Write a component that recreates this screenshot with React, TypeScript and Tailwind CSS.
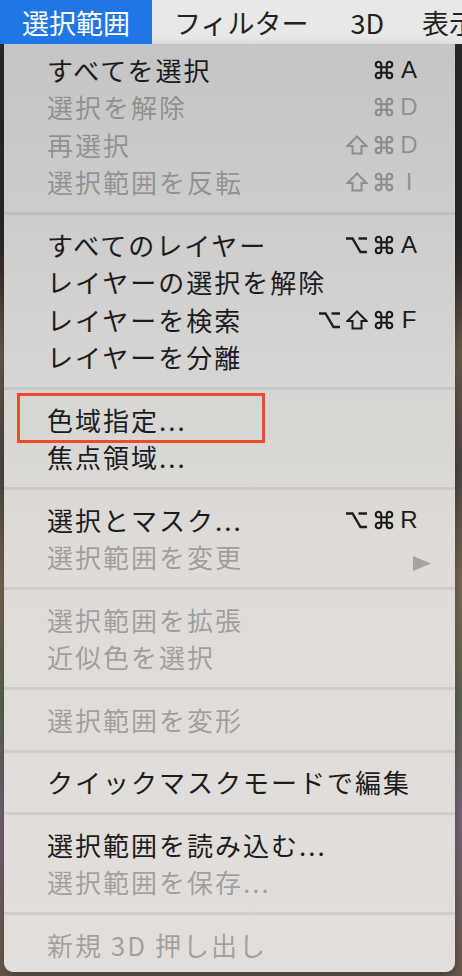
import React from 'react';
import { Command } from 'lucide-react';

type Item = {
  label: string;
  disabled?: boolean;
  mods?: string[];
  keyChar?: string;
  submenu?: boolean;
  marked?: boolean;
};

const SECTIONS: Item[][] = [
  [
    { label: 'すべてを選択', mods: ['⌘'], keyChar: 'A' },
    { label: '選択を解除', disabled: true, mods: ['⌘'], keyChar: 'D' },
    { label: '再選択', disabled: true, mods: ['⇧', '⌘'], keyChar: 'D' },
    { label: '選択範囲を反転', disabled: true, mods: ['⇧', '⌘'], keyChar: 'I' },
  ],
  [
    { label: 'すべてのレイヤー', mods: ['⌥', '⌘'], keyChar: 'A' },
    { label: 'レイヤーの選択を解除' },
    { label: 'レイヤーを検索', mods: ['⌥', '⇧', '⌘'], keyChar: 'F' },
    { label: 'レイヤーを分離' },
  ],
  [{ label: '色域指定...', marked: true }, { label: '焦点領域...' }],
  [
    { label: '選択とマスク...', mods: ['⌥', '⌘'], keyChar: 'R' },
    { label: '選択範囲を変更', disabled: true, submenu: true },
  ],
  [
    { label: '選択範囲を拡張', disabled: true },
    { label: '近似色を選択', disabled: true },
  ],
  [{ label: '選択範囲を変形', disabled: true }],
  [{ label: 'クイックマスクモードで編集' }],
  [
    { label: '選択範囲を読み込む...' },
    { label: '選択範囲を保存...', disabled: true },
  ],
  [{ label: '新規 3D 押し出し', disabled: true }],
];

const JP = "font-['Noto_Sans_CJK_JP','Noto_Sans',sans-serif]";

// shift key glyph: hollow up arrow
function ShiftGlyph() {
  return (
    <svg width="22" height="20" viewBox="0 0 22 20">
      <path
        d="M11 1.5 L20.5 11 L15.5 11 L15.5 18.5 L6.5 18.5 L6.5 11 L1.5 11 Z"
        fill="none"
        stroke="currentColor"
        strokeWidth="2"
      />
    </svg>
  );
}

// option key glyph
function OptionGlyph() {
  return (
    <svg width="23" height="18" viewBox="0 0 23 18">
      <path
        d="M1 2.5 H7.5 L15.5 16 H22 M13.5 2.5 H22"
        fill="none"
        stroke="currentColor"
        strokeWidth="2.4"
      />
    </svg>
  );
}

function Mod({ m }: { m: string }) {
  return (
    <span className="flex w-[27px] justify-center">
      {m === '⇧' && <ShiftGlyph />}
      {m === '⌥' && <OptionGlyph />}
      {m === '⌘' && <Command size={22} strokeWidth={2.3} />}
    </span>
  );
}

function MenuRow({ item }: { item: Item }) {
  const tone = item.disabled ? 'text-black/[0.3]' : 'text-[#1c1c1c]';
  return (
    <div
      className={`relative flex h-[37.5px] items-center pl-[43px] ${
        item.submenu ? 'pr-[24px]' : 'pr-[34px]'
      } ${tone}`}
    >
      {item.marked && (
        <div className="absolute left-[13px] top-[-8px] h-[50px] w-[248px] border-[3px] border-[#ee4a2c]" />
      )}
      <span className={`${JP} text-[26px] leading-none tracking-[2px] whitespace-nowrap`}>
        {item.label}
      </span>
      {item.keyChar && (
        <span className="ml-auto flex items-center">
          {item.mods?.map((m, i) => <Mod key={i} m={m} />)}
          <span className="w-[24px] text-center font-['Liberation_Sans',sans-serif] text-[24px] leading-none">
            {item.keyChar}
          </span>
        </span>
      )}
      {item.submenu && (
        <svg className="ml-auto mt-[12px] shrink-0" width="18" height="15" viewBox="0 0 18 15">
          <path d="M0 0 L18 7.5 L0 15 Z" fill="#a6a4a2" />
        </svg>
      )}
    </div>
  );
}

export default function App() {
  return (
    <div className="relative h-[976px] w-[462px] overflow-hidden bg-[linear-gradient(to_bottom,#2a2a2a_0%,#2a2a2a_24%,#3b3430_28%,#6a5c4e_36%,#4d4943_48%,#7b6a58_60%,#5c6552_72%,#76687a_84%,#6d5b4c_100%)]">
      {/* menu bar */}
      <div
        className={`flex h-[44px] items-center overflow-hidden whitespace-nowrap bg-[#e8e8e8] ${JP} text-[27px] leading-none text-[#222]`}
      >
        <div className="flex h-full shrink-0 items-center bg-[#2176e5] px-[22px] text-white">選択範囲</div>
        <div className="shrink-0 px-[22px]">フィルター</div>
        <div className="shrink-0 pl-[20px] pr-[38px]">3D</div>
        <div className="shrink-0">表示</div>
      </div>

      {/* dropdown */}
      <div className="ml-[4px] w-[451px] rounded-b-[9px] bg-[linear-gradient(to_bottom,#c5c5c5_0%,#cbcbcb_15%,#d6d5d3_35%,#dedbd8_55%,#e2dedb_100%)] pb-[8px] pt-[7px] shadow-[0_6px_14px_rgba(0,0,0,0.35)]">
        {SECTIONS.map((section, si) => (
          <div key={si}>
            {si > 0 && <div className="my-[11px] h-[3px] bg-black/[0.07]" />}
            {section.map((item) => (
              <MenuRow key={item.label} item={item} />
            ))}
          </div>
        ))}
      </div>
    </div>
  );
}
